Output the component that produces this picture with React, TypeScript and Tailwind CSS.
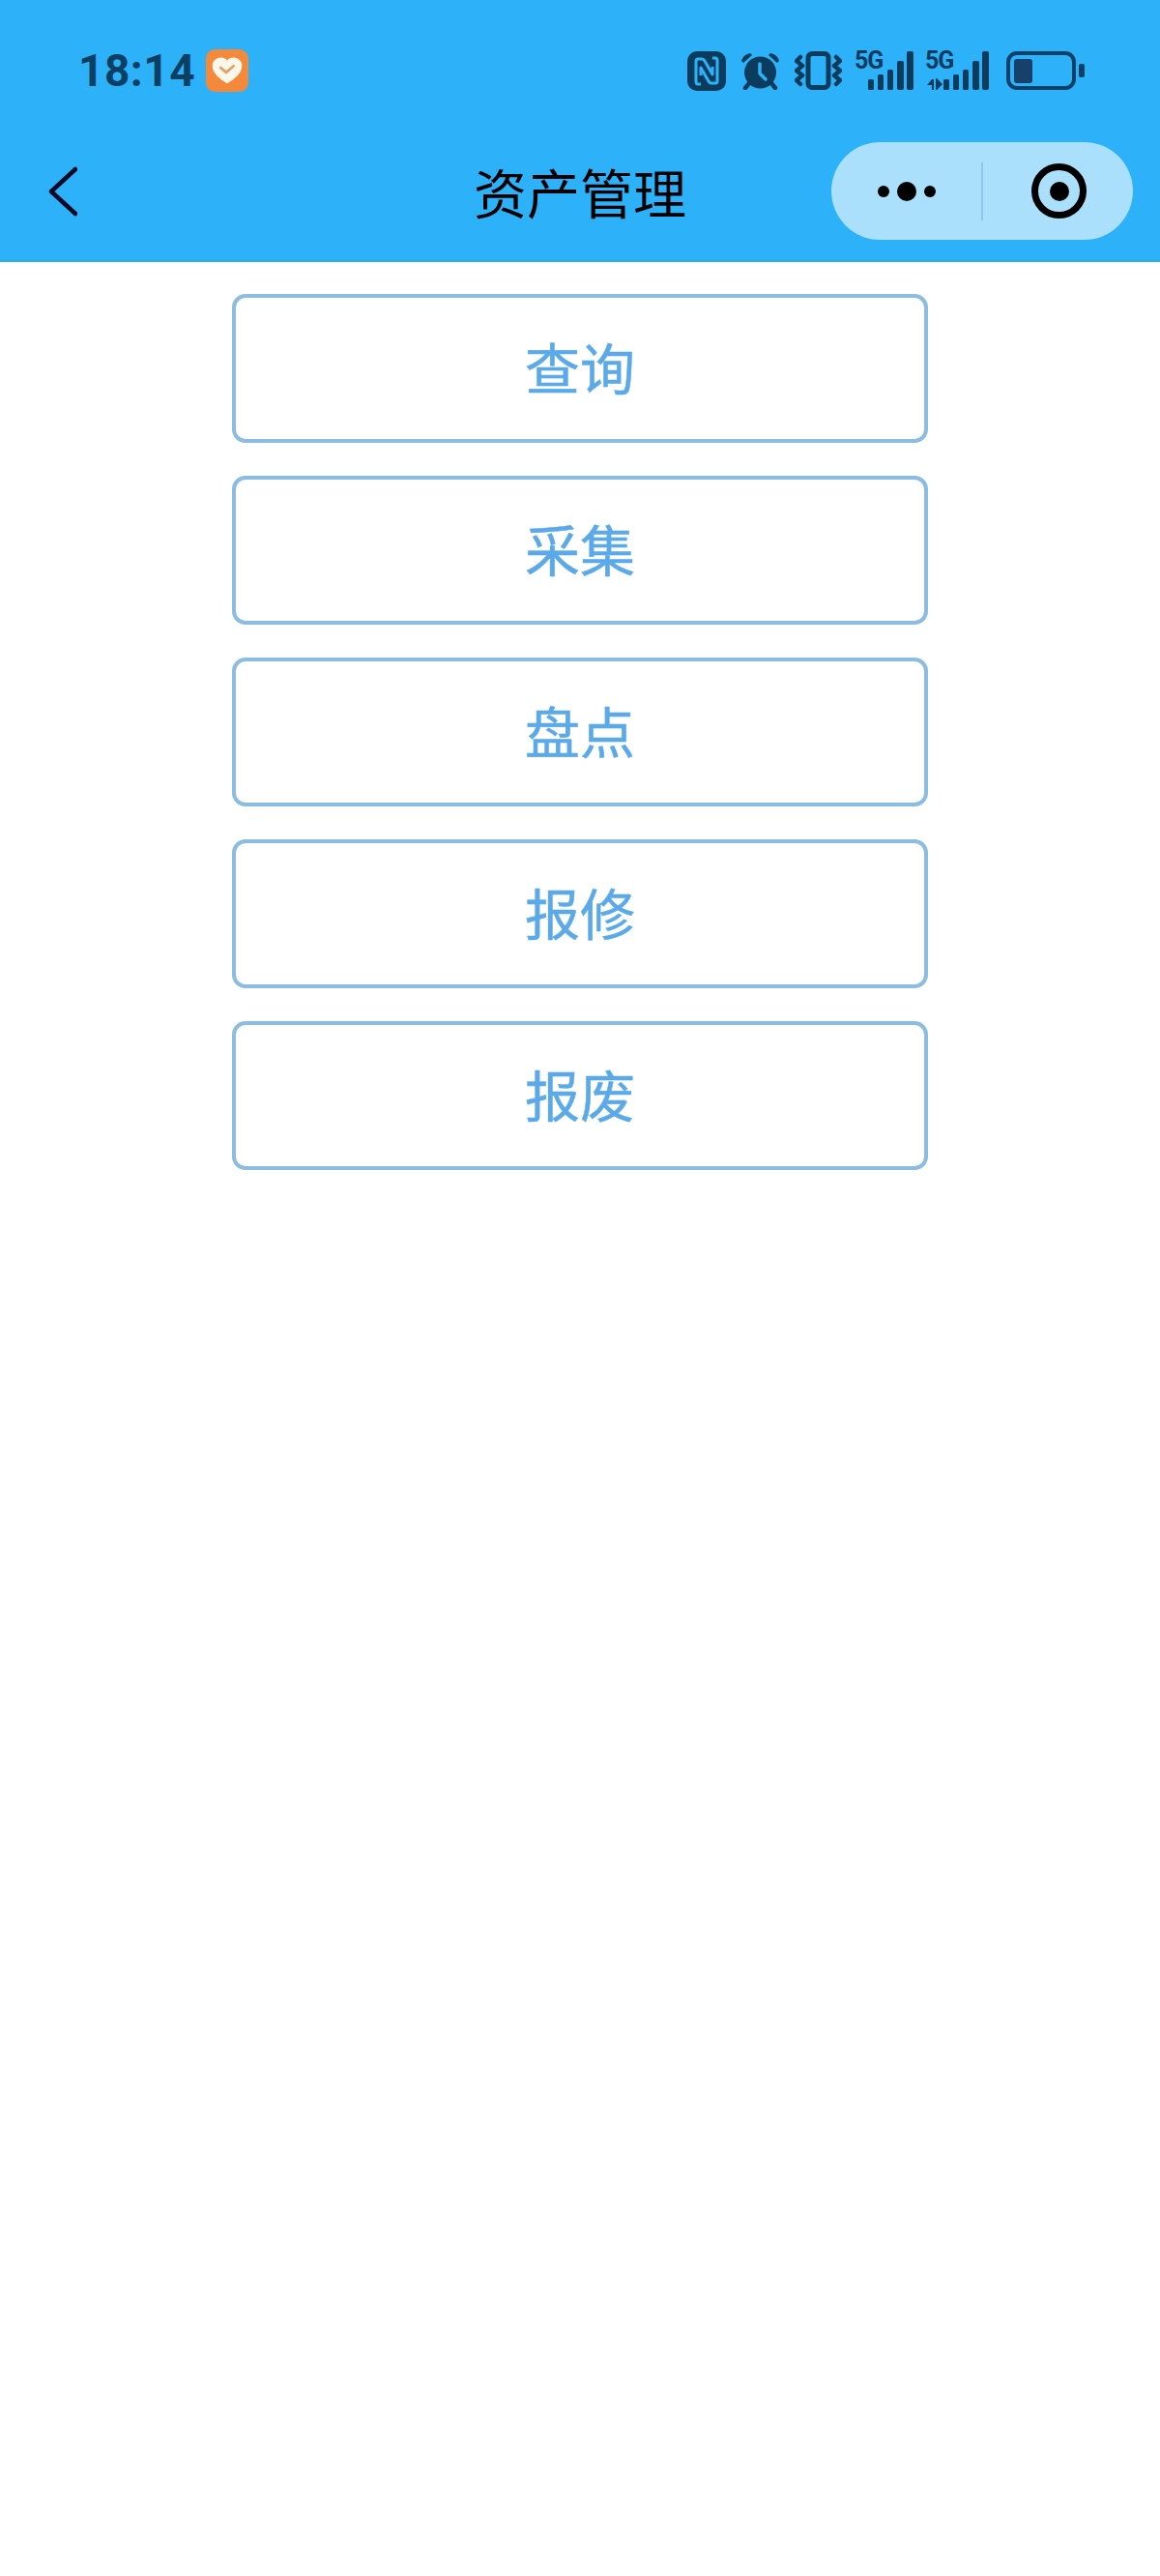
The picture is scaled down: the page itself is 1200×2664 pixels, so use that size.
const actions = ['查询', '采集', '盘点', '报修', '报废']

function SignalBars({ className = '' }: { className?: string }) {
  return (
    <svg width="47" height="40" viewBox="0 0 47 40" className={className} fill="#0b3c5e">
      <rect x="0" y="29" width="6" height="11" rx="1.5" />
      <rect x="10" y="24" width="6" height="16" rx="1.5" />
      <rect x="20" y="19" width="6" height="21" rx="1.5" />
      <rect x="30" y="10" width="7" height="30" rx="2" />
      <rect x="40" y="0" width="7" height="40" rx="2" />
    </svg>
  )
}

function StatusIcons() {
  return (
    <div className="flex items-center">
      {/* nfc */}
      <svg width="40" height="41" viewBox="0 0 40 41">
        <rect width="40" height="41" rx="10" fill="#0b3c5e" />
        <path d="M14 34H11Q9 34 9 31V10Q9 8 11 8H15Q17 8 18 10L26 24V16" fill="none" stroke="#2db1f9" strokeWidth="3" strokeLinejoin="round" />
        <path d="M26 7H29Q31 7 31 10V31Q31 33 29 33H25Q23 33 22 31L14 17V25" fill="none" stroke="#2db1f9" strokeWidth="3" strokeLinejoin="round" />
      </svg>
      {/* alarm */}
      <svg width="41" height="39" viewBox="0 0 41 39" className="ml-[15px]">
        <path d="M1 9Q3 2 10 1L12 3 3 11ZM40 9Q38 2 31 1L29 3 38 11Z" fill="#0b3c5e" />
        <path d="M9 32l-4 5M32 32l4 5" stroke="#0b3c5e" strokeWidth="4.5" strokeLinecap="round" />
        <circle cx="20.5" cy="21" r="16.5" fill="#0b3c5e" />
        <path d="M20 12v10l6 6" fill="none" stroke="#2db1f9" strokeWidth="3.5" strokeLinecap="round" strokeLinejoin="round" />
      </svg>
      {/* vibrate */}
      <svg width="49" height="40" viewBox="0 0 49 40" className="ml-[15px]">
        <rect x="14" y="2.5" width="21" height="35" rx="4" fill="none" stroke="#0b3c5e" strokeWidth="5" />
        <path d="M6 6 2 10l6 5-6 5 6 5-6 5 4 4M43 6l4 4-6 5 6 5-6 5 6 5-4 4" fill="none" stroke="#0b3c5e" strokeWidth="4.5" strokeLinecap="round" strokeLinejoin="round" />
      </svg>
      {/* sim 1 */}
      <div className="relative ml-[13px] h-[40px] w-[61px]">
        <span className="absolute left-0 top-[-1px] font-['Roboto',sans-serif] text-[25px] font-bold leading-[22px] tracking-[-1px] text-[#0b3c5e]">5G</span>
        <SignalBars className="absolute right-0 top-0" />
      </div>
      {/* sim 2 */}
      <div className="relative ml-[12px] h-[40px] w-[66px]">
        <span className="absolute left-0 top-[-1px] font-['Roboto',sans-serif] text-[25px] font-bold leading-[22px] tracking-[-1px] text-[#0b3c5e]">5G</span>
        <svg width="16" height="12" viewBox="0 0 16 12" className="absolute left-[2px] top-[28px]" fill="#0b3c5e">
          <path d="M0 7 5 1H7V12H5V7ZM9 0H10L16 6 10 12H9Z" />
        </svg>
        <SignalBars className="absolute right-0 top-0" />
      </div>
      {/* battery */}
      <div className="ml-[18px] flex items-center">
        <div className="flex h-[40px] w-[72px] items-center rounded-[11px] border-[4px] border-[#0b4068] px-[4px]">
          <div className="h-[25px] w-[19px] rounded-[3px] bg-[#17406a]" />
        </div>
        <div className="ml-[3px] h-[14px] w-[6px] rounded-[2px] bg-[#0b4068]" />
      </div>
    </div>
  )
}

function CapsuleMenu() {
  return (
    <div className="flex h-[101px] w-[312px] items-center rounded-full bg-[#aae0fc]">
      <div className="flex h-full w-[155px] items-center justify-center gap-[8px]">
        <span className="size-[12px] rounded-full bg-black" />
        <span className="size-[20px] rounded-full bg-black" />
        <span className="size-[12px] rounded-full bg-black" />
      </div>
      <div className="h-[60px] w-[2px] bg-[#8fc8e8]" />
      <div className="flex h-full flex-1 items-center justify-center pl-[2px]">
        <div className="flex size-[57px] items-center justify-center rounded-full border-[7px] border-black">
          <span className="size-[20px] rounded-full bg-black" />
        </div>
      </div>
    </div>
  )
}

export default function App() {
  return (
    <div className="min-h-[2664px] bg-white font-['Noto_Sans_CJK_SC','Noto_Sans',sans-serif]">
      <header className="h-[271px] border-b-[3px] border-[#2aaee6] bg-[#2db1f9]">
        <div className="flex h-[147px] items-center justify-between pb-[1px] pl-[81px] pr-[78px]">
          <div className="flex items-center">
            <span className="font-['Roboto',sans-serif] text-[46px] font-bold leading-none tracking-[0.5px] text-[#0b3f63]">18:14</span>
            <svg width="44" height="44" viewBox="0 0 46 46" className="ml-[11px]">
              <rect width="46" height="46" rx="10" fill="#f5893b" />
              <path d="M23 37C15 32 7 26 7 18c0-6 5-9 9-9 3 0 5 1 7 3 2-2 4-3 7-3 4 0 9 3 9 9 0 8-8 14-16 19Z" fill="#fdf6ea" />
              <path d="M16 20l6 5 8-7" fill="none" stroke="#d9a868" strokeWidth="3" strokeLinecap="round" strokeLinejoin="round" />
            </svg>
          </div>
          <StatusIcons />
        </div>
        <div className="grid h-[101px] grid-cols-[1fr_auto_1fr] items-center">
          <button className="w-fit pl-[50px]">
            <svg width="30" height="52" viewBox="0 0 30 52" className="block">
              <path d="M28 3 3 26l25 23" fill="none" stroke="#050a26" strokeWidth="4.5" strokeLinecap="round" strokeLinejoin="round" />
            </svg>
          </button>
          <h1 className="text-[55px] font-normal leading-none text-black">资产管理</h1>
          <div className="flex justify-end pr-[28px]">
            <CapsuleMenu />
          </div>
        </div>
      </header>
      <main className="flex flex-col items-center gap-[34px] pt-[33px]">
        {actions.map((label) => (
          <button
            key={label}
            className="flex h-[154px] w-[720px] items-center justify-center rounded-[14px] border-[4px] border-[#8cbde0] bg-white pb-[6px] text-[57px] font-normal leading-none text-[#5ba9e8] [-webkit-text-stroke:0.5px_#5ba9e8]"
          >
            {label}
          </button>
        ))}
      </main>
    </div>
  )
}
